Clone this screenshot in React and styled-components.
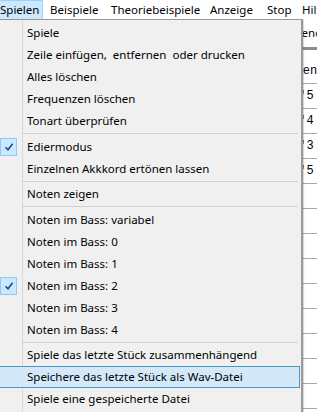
import React from 'react'
import styled, { createGlobalStyle } from 'styled-components'

const GlobalStyle = createGlobalStyle`
  html, body {
    margin: 0;
    padding: 0;
    background: #ffffff;
  }
  body {
    font-family: "Noto Sans", "Liberation Sans", sans-serif;
    font-size: 11.5px;
    color: #000;
  }
`

const menuBar = [
  { label: 'Spielen', width: 50, open: true },
  { label: 'Beispiele', width: 61 },
  { label: 'Theoriebeispiele', width: 99 },
  { label: 'Anzeige', width: 57 },
  { label: 'Stop', width: 35 },
  { label: 'Hilfe', width: 40 },
]

const entries = [
  { label: 'Spiele' },
  { label: 'Zeile einfügen,  entfernen  oder drucken' },
  { label: 'Alles löschen' },
  { label: 'Frequenzen löschen' },
  { label: 'Tonart überprüfen' },
  { sep: true },
  { label: 'Ediermodus', checked: true },
  { label: 'Einzelnen Akkkord ertönen lassen' },
  { sep: true },
  { label: 'Noten zeigen' },
  { sep: true },
  { label: 'Noten im Bass: variabel' },
  { label: 'Noten im Bass: 0' },
  { label: 'Noten im Bass: 1' },
  { label: 'Noten im Bass: 2', checked: true },
  { label: 'Noten im Bass: 3' },
  { label: 'Noten im Bass: 4' },
  { sep: true },
  { label: 'Spiele das letzte Stück zusammenhängend' },
  { label: 'Speichere das letzte Stück als Wav-Datei', active: true },
  { label: 'Spiele eine gespeicherte Datei' },
]

const tableRows = ['I\'5', 'V\'4', 'I\'3', 'V\'5', '', '', '', '', '', '', '', '', '', '']

const App = () => {
  return (
    <>
      <GlobalStyle />
      <Window>
        <MenuBar>
          {menuBar.map(({ label, width, open }) => (
            <MenuTitle key={label} $width={width} $open={open}>
              {label}
            </MenuTitle>
          ))}
        </MenuBar>

        <Content>
          <Toolbar>
            <ToolButton>Während</ToolButton>
          </Toolbar>
          <Divider />
          <Table>
            <Row $indent={274}>
              <Cell>Stufen</Cell>
            </Row>
            {tableRows.map((txt, i) => (
              <Row key={i} $indent={292}>
                <Cell>{txt}</Cell>
              </Row>
            ))}
          </Table>
        </Content>

        <Popup>
          {entries.map((e, i) =>
            e.sep ? (
              <Separator key={i} />
            ) : (
              <Item key={i} $active={e.active}>
                {e.checked && (
                  <Check>
                    <svg width="10" height="10" viewBox="0 0 10 10">
                      <path d="M1.5 5.2 L4 7.8 L8.6 1.8" fill="none" stroke="#1c3f94" strokeWidth="1.5" />
                    </svg>
                  </Check>
                )}
                <Label>{e.label}</Label>
              </Item>
            )
          )}
        </Popup>
      </Window>
    </>
  )
}

const Window = styled.div`
  position: relative;
  width: 317px;
  height: 412px;
  overflow: hidden;
  background: #ffffff;
`

const MenuBar = styled.div`
  display: flex;
  height: 19px;
  background: #ffffff;
  margin-left: -7px;
`

const MenuTitle = styled.div`
  flex: 0 0 auto;
  width: ${p => p.$width}px;
  box-sizing: border-box;
  padding: 0 6px;
  height: 19px;
  line-height: 17px;
  white-space: nowrap;
  background: ${p => (p.$open ? '#cce8ff' : 'transparent')};
  border: 1px solid ${p => (p.$open ? '#99d1ff' : 'transparent')};
  border-bottom: none;
`

const Content = styled.div`
  display: flex;
  flex-direction: column;
`

const Toolbar = styled.div`
  display: flex;
  height: 27px;
  align-items: center;
  padding-left: 273px;
`

const ToolButton = styled.div`
  white-space: nowrap;
`

const Divider = styled.div`
  height: 3px;
  background: #8c8c8c;
  margin-top: 1px;
  margin-bottom: 9px;
`

const Table = styled.div`
  display: flex;
  flex-direction: column;
`

const Row = styled.div`
  height: 25px;
  box-sizing: border-box;
  border-bottom: 1px solid #a8a8a8;
  display: flex;
  align-items: center;
  padding-left: ${p => p.$indent}px;
`

const Cell = styled.div`
  font-family: "Liberation Mono", "DejaVu Sans Mono", monospace;
  font-size: 12px;
  white-space: nowrap;
`

const Popup = styled.div`
  position: absolute;
  top: 19px;
  left: -3px;
  width: 306px;
  box-sizing: border-box;
  padding: 2px 0;
  border: 1px solid #979797;
  border-right-width: 2px;
  border-right-color: #9a9a9a;
  background: linear-gradient(
    to right,
    #f0f0f0 24px,
    #d7d7d7 24px,
    #d7d7d7 25px,
    #f0f0f0 25px
  );
  box-shadow: 1px 1px 1px rgba(0, 0, 0, 0.15);
  display: flex;
  flex-direction: column;
`

const Item = styled.div`
  position: relative;
  height: 22px;
  margin: 0 1px 0 1px;
  box-sizing: border-box;
  display: flex;
  align-items: center;
  padding-left: 27px;
  background: ${p => (p.$active ? '#d3e9fa' : 'transparent')};
  border: 1px solid ${p => (p.$active ? '#4a98c4' : 'transparent')};
`

const Label = styled.span`
  white-space: pre;
  line-height: 16px;
`

const Check = styled.div`
  position: absolute;
  left: 0;
  top: 1px;
  width: 17px;
  height: 18px;
  box-sizing: border-box;
  background: #cce8ff;
  border: 1px solid #90c8f6;
  display: flex;
  align-items: center;
  justify-content: center;
`

const Separator = styled.div`
  height: 1px;
  margin: 1px 3px 1.5px 24px;
  background: #d0d0d0;
`

export default App
